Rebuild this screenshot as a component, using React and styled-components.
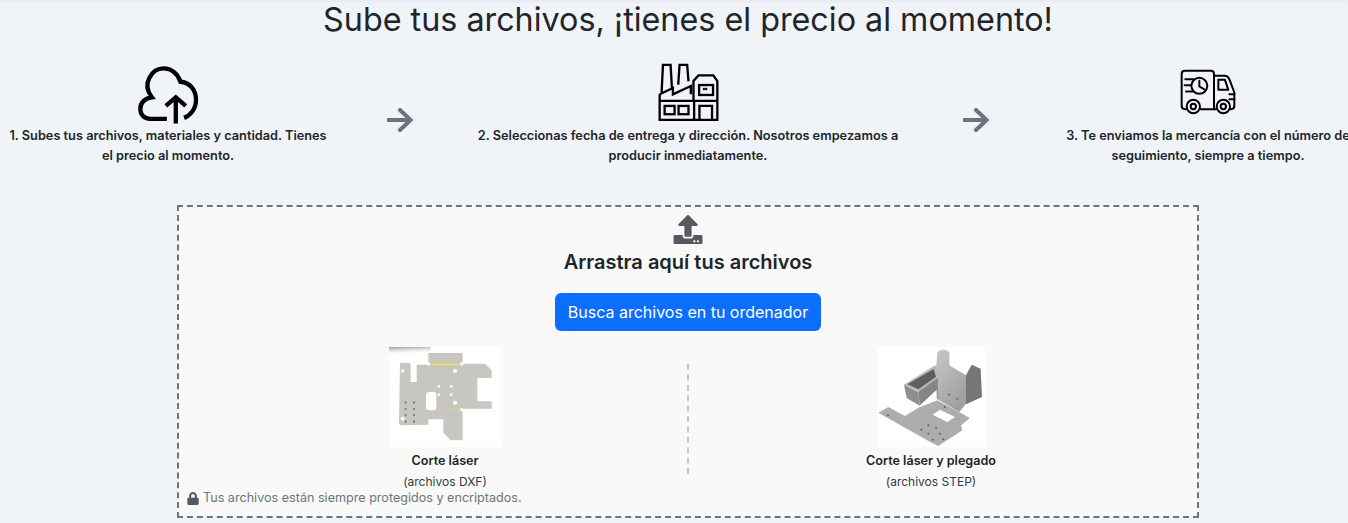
import React from "react";
import styled, { createGlobalStyle } from "styled-components";
import { FaUpload, FaLock } from "react-icons/fa";

const Global = createGlobalStyle`
  html, body { margin: 0; padding: 0; height: 523px; overflow: hidden; }
  body {
    background: linear-gradient(#e6eaf1, #f0f4f9 4px) #f0f4f9;
    font-family: Inter, "Liberation Sans", sans-serif;
    color: #212529;
  }
`;

const Page = styled.div`
  width: 1376px;
  display: flex;
  flex-direction: column;
  align-items: center;
`;

const Title = styled.h1`
  margin: 0;
  height: 40px;
  font-size: 32.3px;
  line-height: 40px;
  font-weight: 400;
  text-align: center;
`;

const Steps = styled.div`
  width: 100%;
  height: 126px;
  margin-top: 22px;
  display: grid;
  grid-template-columns: 336px 128px 448px 128px 336px;
`;

const Step = styled.div`
  display: flex;
  flex-direction: column;
  align-items: center;
`;

const StepIcon = styled.div`
  height: 60px;
  display: flex;
  align-items: flex-start;
  justify-content: center;
  padding-top: ${(p) => p.$pad || 0}px;
  box-sizing: border-box;
`;

const StepText = styled.p`
  margin: 4px 0 0;
  font-size: 12.75px;
  line-height: 20px;
  font-weight: 600;
  text-align: center;
`;

const ArrowCell = styled.div`
  display: flex;
  justify-content: center;
  padding-top: 46px;
`;

const Zone = styled.section`
  box-sizing: border-box;
  width: 1022px;
  height: 313px;
  margin-top: 17px;
  border: 2px dashed #6c757d;
  background: #f9f9f9;
  display: flex;
  flex-direction: column;
  align-items: center;
  padding-top: 8px;
`;

const UploadGlyph = styled(FaUpload)`
  width: 30px;
  height: 29px;
  color: #555a60;
  display: block;
`;

const ZoneTitle = styled.h2`
  margin: 4px 0 0;
  font-size: 20px;
  line-height: 28px;
  font-weight: 600;
`;

const BrowseButton = styled.button`
  margin-top: 17px;
  height: 38px;
  padding: 0 13px;
  border: 0;
  border-radius: 6px;
  background: #0d6efd;
  color: #fff;
  font-family: inherit;
  font-size: 16px;
  font-weight: 400;
`;

const Options = styled.div`
  align-self: stretch;
  margin-top: 16px;
  padding: 0 40px 0 39px;
  display: grid;
  grid-template-columns: 454px 1px 1fr;
  column-gap: 16px;
  height: 144px;
`;

const Option = styled.div`
  display: flex;
  flex-direction: column;
  align-items: center;
`;

const Thumb = styled.svg`
  display: block;
  background: #fff;
`;

const OptionName = styled.div`
  margin-top: 6px;
  font-size: 12.6px;
  line-height: 16px;
  font-weight: 600;
`;

const OptionFormat = styled.div`
  margin-top: 5px;
  font-size: 12px;
  line-height: 16px;
  color: #343a40;
`;

const Divider = styled.div`
  margin: 17px 0 0 -1px;
  height: 110px;
  border-left: 2px dashed #c4c6c8;
`;

const Privacy = styled.div`
  align-self: flex-start;
  margin: -1px 0 0 8px;
  display: flex;
  align-items: center;
  gap: 4px;
  font-size: 12.6px;
  line-height: 16px;
  color: #6c757d;
`;

const LockGlyph = styled(FaLock)`
  width: 12px;
  height: 13px;
  color: #555a60;
`;

const Arrow = () => (
  <svg width="26" height="24" viewBox="0 0 26 24" fill="none" stroke="#6c757d" strokeWidth="4">
    <path d="M0 12H23" />
    <path d="M13 2L23.5 12L13 22" strokeLinecap="round" />
  </svg>
);

const CloudIcon = () => (
  <svg width="63" height="60" viewBox="410 190 190 180" fill="none" stroke="#000" strokeWidth="13">
    <path d="M500 355H450C430 355 420 340 420 325C420 305 435 292 455 290C440 270 437 250 447 232C457 212 472 203 490 203C515 203 533 220 541 243C570 245 588 268 588 298C588 325 570 345 552 352" />
    <path d="M527 369V292M497 316L527 290L557 316" />
  </svg>
);

const FactoryIcon = () => (
  <svg width="63" height="60" viewBox="620 38 190 180" fill="none" stroke="#000" strokeWidth="7">
    <path d="M634 128L638 46H661L665 116M684 106L688 46H711L715 96" />
    <path d="M628 135L668 116V135L722 110V135M628 135V212H802V95L790 78H745L730 95V155M628 155H802M732 155V212" />
    <rect x="643" y="170" width="30" height="25" />
    <rect x="685" y="170" width="30" height="25" />
    <path d="M748 212V170H786V212" />
    <rect x="747" y="107" width="42" height="30" />
    <rect x="760" y="117" width="10" height="4" strokeWidth="3" />
  </svg>
);

const TruckIcon = () => (
  <svg width="56" height="46" viewBox="690 60 168 137" fill="none" stroke="#000" strokeWidth="6" strokeLinecap="round" strokeLinejoin="round">
    <path d="M708 180H705Q695 180 695 170V75Q695 65 705 65H783Q792 65 792 75V180" />
    <path d="M792 80H825Q833 80 838 90L853 130V170Q853 180 843 180H841" />
    <path d="M805 92H825L835 122H805ZM838 135H853M838 150H853M752 180H798" />
    <circle cx="730" cy="172" r="20" />
    <circle cx="730" cy="172" r="8" />
    <circle cx="820" cy="172" r="20" />
    <circle cx="820" cy="172" r="8" />
    <circle cx="748" cy="110" r="24" />
    <path d="M748 95V112L762 120M706 90H730M704 108H722M708 127H728" />
  </svg>
);

const holes = [[68, 87, 5], [225, 87, 6], [177, 133, 4], [214, 133, 4], [177, 158, 4], [214, 158, 4], [225, 182, 6], [68, 230, 6]];
const dots = [[77, 182], [102, 182], [77, 201], [102, 201], [77, 220], [102, 220], [77, 239], [102, 239]];

const FlatPart = () => (
  <Thumb width="112" height="100" viewBox="27 15 336 300">
    <defs>
      <linearGradient id="shadeX" x1="0" y1="0" x2="0.2" y2="1">
        <stop offset="0" stopColor="#9c9c9c" />
        <stop offset="1" stopColor="#ffffff" stopOpacity="0" />
      </linearGradient>
      <filter id="soft1"><feGaussianBlur stdDeviation="1" /></filter>
    </defs>
    <rect x="27" y="15" width="125" height="24" fill="url(#shadeX)" />
    <g filter="url(#soft1)">
      <path
        fill="#c7c6c1"
        d="M60 62H88L92 68V120H110V68H145V33H248V65H315L335 85V108H292V178H335V200H248V295H212L190 272V232H145V248L62 250L57 245Z"
      />
      {holes.map(([x, y, r]) => <circle key={`${x}-${y}`} cx={x} cy={y} r={r} fill="#fff" />)}
      {dots.map(([x, y]) => <circle key={`${x}-${y}`} cx={x} cy={y} r="3.2" fill="#77776f" />)}
      <rect x="138" y="150" width="31" height="55" rx="9" fill="#fff" />
      <circle cx="146" cy="66" r="5" fill="#fff" />
      <circle cx="245" cy="66" r="5" fill="#fff" />
      <circle cx="245" cy="203" r="5" fill="#fff" />
      <path d="M152 67H240" stroke="#f0ec2e" strokeWidth="4" />
      <path d="M192 203H238" stroke="#e6e24a" strokeWidth="2.5" strokeDasharray="6 2" />
    </g>
  </Thumb>
);

const BentPart = () => (
  <Thumb width="108" height="100" viewBox="51 15 324 300">
    <defs>
      <filter id="soft2"><feGaussianBlur stdDeviation="1" /></filter>
      <linearGradient id="wall" x1="0" y1="0" x2="0.6" y2="1">
        <stop offset="0" stopColor="#c9c8c5" />
        <stop offset="1" stopColor="#9f9f9d" />
      </linearGradient>
    </defs>
    <g filter="url(#soft2)">
      <path fill="#adadab" d="M55 212L85 195L135 222L175 197L232 175L330 228L303 250L307 265L235 312L215 302Z" />
      <path fill="url(#wall)" d="M232 30Q250 15 268 30V70L318 100V185L298 210L232 172L226 110Z" />
      <path fill="#767676" d="M318 100L335 68L362 80L366 165L318 187Z" />
      <path fill="#b8b8b6" d="M132 128L225 70L232 76L232 108L178 150Z" />
      <path fill="#5e5e5e" d="M142 127L221 81L228 104L175 142Z" />
      <path fill="#858583" d="M175 150L232 108V142L180 190Z" />
      <path fill="#8f8f8d" d="M132 128L175 150L180 192L140 168Z" />
      <path fill="#fff" d="M218 218L240 203L285 225L262 240Z" />
      {[[184, 263], [205, 250], [228, 258], [205, 275], [240, 275], [218, 293], [250, 292], [267, 158], [292, 170], [254, 195], [84, 220]].map(([x, y]) => (
        <circle key={`${x}-${y}`} cx={x} cy={y} r="3" fill="#5f5f5f" />
      ))}
      <path d="M232 108V172" stroke="#8b8b8b" strokeWidth="3" />
    </g>
  </Thumb>
);

export default function App() {
  return (
    <Page>
      <Global />
      <Title>Sube tus archivos, ¡tienes el precio al momento!</Title>
      <Steps>
        <Step>
          <StepIcon $pad={2}><CloudIcon /></StepIcon>
          <StepText>1. Subes tus archivos, materiales y cantidad. Tienes<br />el precio al momento.</StepText>
        </Step>
        <ArrowCell><Arrow /></ArrowCell>
        <Step>
          <StepIcon><FactoryIcon /></StepIcon>
          <StepText>2. Seleccionas fecha de entrega y dirección. Nosotros empezamos a<br />producir inmediatamente.</StepText>
        </Step>
        <ArrowCell><Arrow /></ArrowCell>
        <Step>
          <StepIcon $pad={7}><TruckIcon /></StepIcon>
          <StepText>3. Te enviamos la mercancía con el número de<br />seguimiento, siempre a tiempo.</StepText>
        </Step>
      </Steps>
      <Zone>
        <UploadGlyph />
        <ZoneTitle>Arrastra aquí tus archivos</ZoneTitle>
        <BrowseButton>Busca archivos en tu ordenador</BrowseButton>
        <Options>
          <Option>
            <FlatPart />
            <OptionName>Corte láser</OptionName>
            <OptionFormat>(archivos DXF)</OptionFormat>
          </Option>
          <Divider />
          <Option>
            <BentPart />
            <OptionName>Corte láser y plegado</OptionName>
            <OptionFormat>(archivos STEP)</OptionFormat>
          </Option>
        </Options>
        <Privacy><LockGlyph />Tus archivos están siempre protegidos y encriptados.</Privacy>
      </Zone>
    </Page>
  );
}
